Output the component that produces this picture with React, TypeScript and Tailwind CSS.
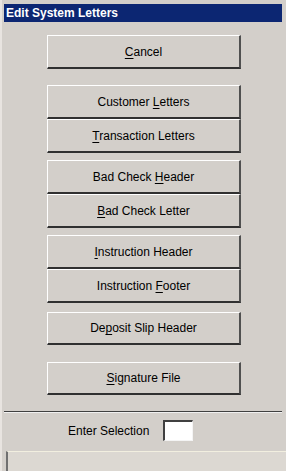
import React from "react";

const font = { fontFamily: '"Liberation Sans", Arial, sans-serif' };

function Btn({ pre, u, post, h = "h-[34px]" }: { pre: string; u: string; post: string; h?: string }) {
  return (
    <div
      className={`${h} w-[194px] flex items-center justify-center border-t border-l border-t-white border-l-white border-b-2 border-r-2 border-b-[#303030] border-r-[#505050] text-[12px] text-black`}
    >
      <span>
        {pre}
        <span className="underline underline-offset-2">{u}</span>
        {post}
      </span>
    </div>
  );
}

export default function App() {
  return (
    <div
      className="w-[286px] h-[471px] bg-[#d3cfca] overflow-hidden flex flex-col border-l-2 border-l-[#e8e4e0]"
      style={font}
    >
      <div className="mt-[4px] ml-[2px] mr-[4px] h-[18px] bg-[#0c2672] text-white font-bold text-[12px] leading-[18px] pl-[2px]">
        Edit System Letters
      </div>

      <div className="pl-[45px] flex flex-col">
        <div className="mt-[13px]">
          <Btn pre="" u="C" post="ancel" />
        </div>
        <div className="mt-[16px] flex flex-col">
          <Btn pre="Customer " u="L" post="etters" />
          <Btn pre="" u="T" post="ransaction Letters" />
        </div>
        <div className="mt-[7px] flex flex-col">
          <Btn pre="Bad Check " u="H" post="eader" />
          <Btn pre="" u="B" post="ad Check Letter" />
        </div>
        <div className="mt-[7px] flex flex-col">
          <Btn pre="" u="I" post="nstruction Header" />
          <Btn pre="Instruction " u="F" post="ooter" />
        </div>
        <div className="mt-[9px]">
          <Btn pre="De" u="p" post="osit Slip Header" h="h-[33px]" />
        </div>
        <div className="mt-[17px]">
          <Btn pre="" u="S" post="ignature File" h="h-[33px]" />
        </div>
      </div>

      <div className="mt-[16px] ml-[2px] mr-[4px] h-[2px] border-t border-t-[#404040] border-b border-b-[#f0f0f0]" />

      <div className="mt-[7px] pl-[66px] flex items-center h-[21px]">
        <span className="text-[12px] text-black">Enter Selection</span>
        <div className="ml-[14px] w-[30px] h-[21px] bg-white border-t-2 border-l-2 border-t-[#404040] border-l-[#404040] border-b border-r border-b-[#f4f4f4] border-r-[#f4f4f4]" />
      </div>

      <div className="mt-[10px] ml-[4px] flex-1 bg-[#dcd8d2] border-t border-t-[#f2efe0] border-l-2 border-l-[#707070]" />
    </div>
  );
}
